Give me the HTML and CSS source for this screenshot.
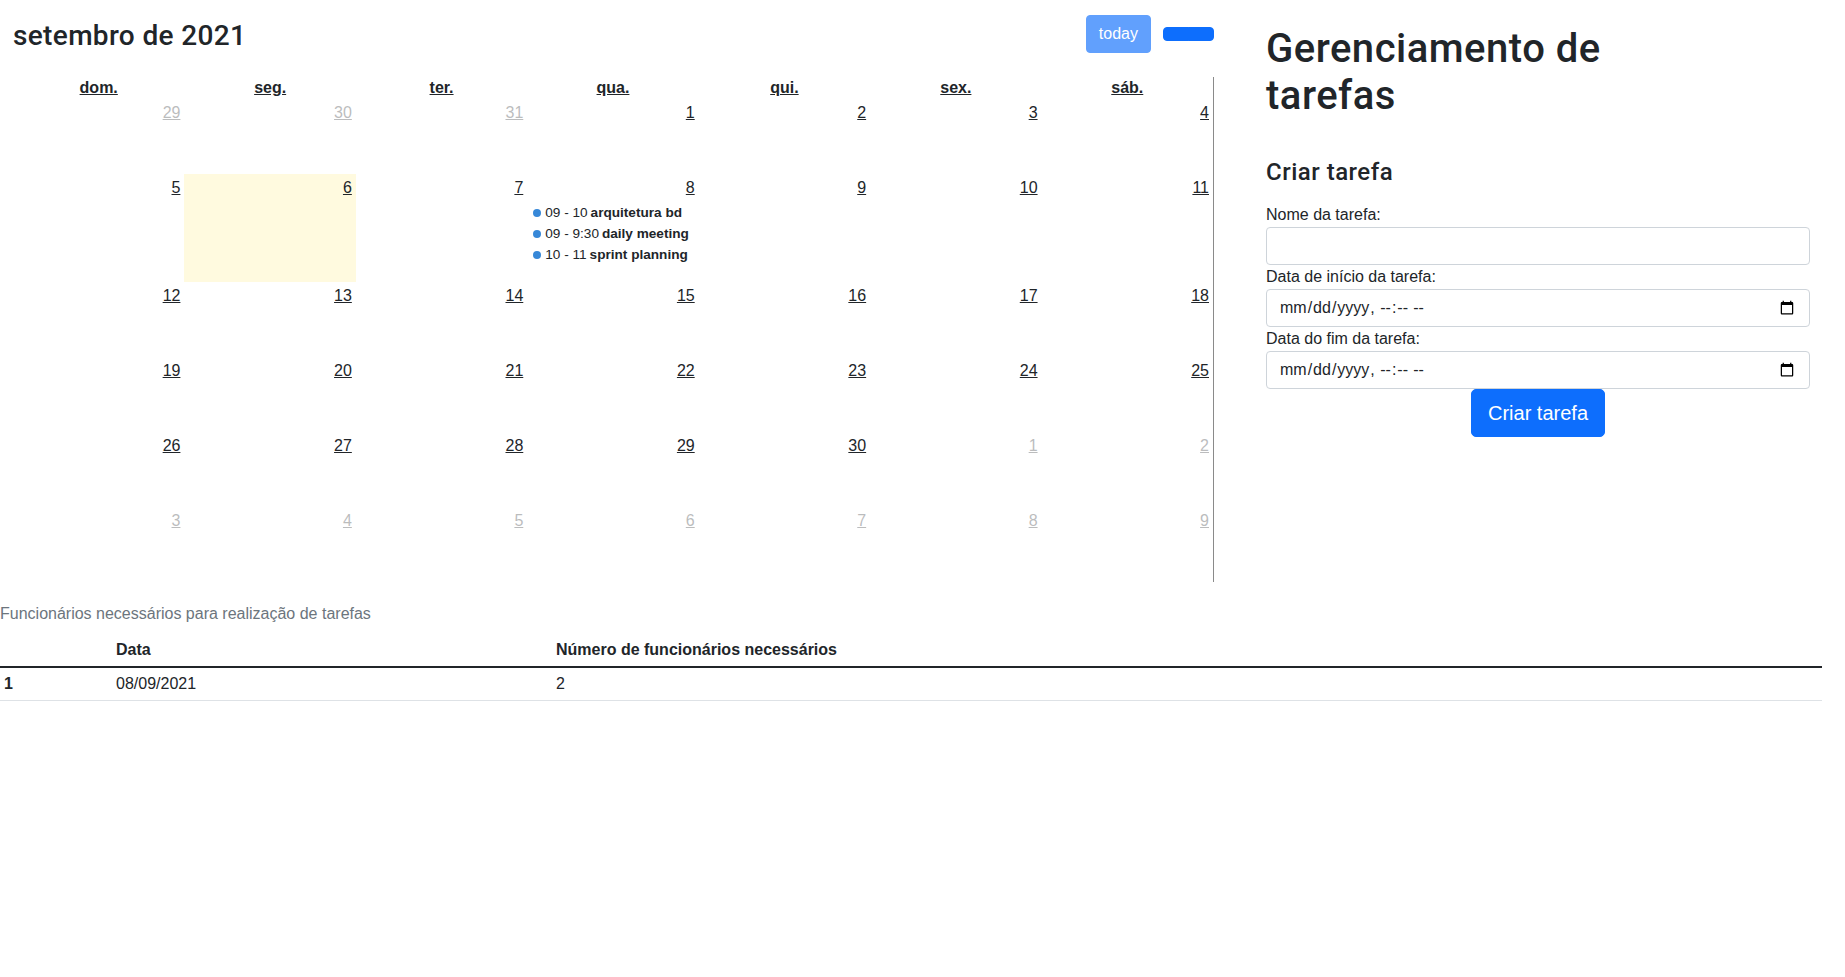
FILE: index.html
```html
<!DOCTYPE html>
<html lang="pt-BR">
<head>
<meta charset="utf-8">
<title>Gerenciamento de tarefas</title>
<link rel="stylesheet" href="styles.css">
</head>
<body>
<div class="top">
  <section class="cal-col">
    <div class="toolbar">
      <h2 class="cal-title">setembro de 2021</h2>
      <div class="toolbar-actions">
        <button class="btn btn-today" disabled>today</button>
        <div class="btn-group">
          <button class="btn btn-nav" aria-label="prev"></button>
          <button class="btn btn-nav" aria-label="next"></button>
        </div>
      </div>
    </div>
    <div class="grid">
      <div class="dow-row">
        <div class="dow"><a>dom.</a></div>
        <div class="dow"><a>seg.</a></div>
        <div class="dow"><a>ter.</a></div>
        <div class="dow"><a>qua.</a></div>
        <div class="dow"><a>qui.</a></div>
        <div class="dow"><a>sex.</a></div>
        <div class="dow"><a>sáb.</a></div>
      </div>
      <div class="week">
        <div class="day other"><a class="num">29</a></div>
        <div class="day other"><a class="num">30</a></div>
        <div class="day other"><a class="num">31</a></div>
        <div class="day"><a class="num">1</a></div>
        <div class="day"><a class="num">2</a></div>
        <div class="day"><a class="num">3</a></div>
        <div class="day"><a class="num">4</a></div>
      </div>
      <div class="week">
        <div class="day"><a class="num">5</a></div>
        <div class="day today"><a class="num">6</a></div>
        <div class="day"><a class="num">7</a></div>
        <div class="day">
          <a class="num">8</a>
          <div class="events">
            <div class="event"><span class="dot"></span><span class="time">09 - 10</span><span class="ev-title">arquitetura bd</span></div>
            <div class="event"><span class="dot"></span><span class="time">09 - 9:30</span><span class="ev-title">daily meeting</span></div>
            <div class="event"><span class="dot"></span><span class="time">10 - 11</span><span class="ev-title">sprint planning</span></div>
          </div>
        </div>
        <div class="day"><a class="num">9</a></div>
        <div class="day"><a class="num">10</a></div>
        <div class="day"><a class="num">11</a></div>
      </div>
      <div class="week">
        <div class="day"><a class="num">12</a></div>
        <div class="day"><a class="num">13</a></div>
        <div class="day"><a class="num">14</a></div>
        <div class="day"><a class="num">15</a></div>
        <div class="day"><a class="num">16</a></div>
        <div class="day"><a class="num">17</a></div>
        <div class="day"><a class="num">18</a></div>
      </div>
      <div class="week">
        <div class="day"><a class="num">19</a></div>
        <div class="day"><a class="num">20</a></div>
        <div class="day"><a class="num">21</a></div>
        <div class="day"><a class="num">22</a></div>
        <div class="day"><a class="num">23</a></div>
        <div class="day"><a class="num">24</a></div>
        <div class="day"><a class="num">25</a></div>
      </div>
      <div class="week">
        <div class="day"><a class="num">26</a></div>
        <div class="day"><a class="num">27</a></div>
        <div class="day"><a class="num">28</a></div>
        <div class="day"><a class="num">29</a></div>
        <div class="day"><a class="num">30</a></div>
        <div class="day other"><a class="num">1</a></div>
        <div class="day other"><a class="num">2</a></div>
      </div>
      <div class="week">
        <div class="day other"><a class="num">3</a></div>
        <div class="day other"><a class="num">4</a></div>
        <div class="day other"><a class="num">5</a></div>
        <div class="day other"><a class="num">6</a></div>
        <div class="day other"><a class="num">7</a></div>
        <div class="day other"><a class="num">8</a></div>
        <div class="day other"><a class="num">9</a></div>
      </div>
    </div>
  </section>

  <section class="form-col">
    <h1 class="page-title">Gerenciamento de tarefas</h1>
    <h4 class="form-title">Criar tarefa</h4>
    <form class="task-form">
      <label for="nome">Nome da tarefa:</label>
      <input id="nome" class="form-control" type="text">
      <label for="inicio">Data de início da tarefa:</label>
      <input id="inicio" class="form-control" type="datetime-local">
      <label for="fim">Data do fim da tarefa:</label>
      <input id="fim" class="form-control" type="datetime-local">
      <div class="submit-row">
        <button type="button" class="btn btn-lg">Criar tarefa</button>
      </div>
    </form>
  </section>
</div>

<section class="table-section">
  <table class="staff-table">
    <caption>Funcionários necessários para realização de tarefas</caption>
    <thead>
      <tr>
        <th class="c1"></th>
        <th class="c2">Data</th>
        <th>Número de funcionários necessários</th>
      </tr>
    </thead>
    <tbody>
      <tr>
        <th>1</th>
        <td>08/09/2021</td>
        <td>2</td>
      </tr>
    </tbody>
  </table>
</section>
</body>
</html>
```

FILE: styles.css
```css
* { box-sizing: border-box; }

body {
  margin: 0;
  font-family: "Liberation Sans", Arial, sans-serif;
  font-size: 16px;
  line-height: 24px;
  color: #212529;
  background: #fff;
}

.top {
  display: flex;
  align-items: flex-start;
}

/* ---------- calendar ---------- */
.cal-col {
  width: 1214px;
  padding: 15px 0 0 13px;
  flex: none;
}

.toolbar {
  display: flex;
  align-items: center;
  justify-content: space-between;
  height: 38px;
  margin-bottom: 24px;
}

.cal-title {
  margin: 0;
  padding-top: 3px;
  font-family: Roboto, "Liberation Sans", sans-serif;
  font-weight: 500;
  font-size: 28px;
  line-height: 33.6px;
  letter-spacing: .35px;
}

.toolbar-actions {
  display: flex;
  align-items: center;
  gap: 12px;
}

.btn {
  font-family: inherit;
  color: #fff;
  background: #0d6efd;
  border: 1px solid #0d6efd;
  border-radius: 4px;
  cursor: pointer;
}

.btn-today {
  height: 38px;
  padding: 6px 12px;
  font-size: 16px;
  line-height: 24px;
  opacity: .65;
  cursor: default;
}

.btn-group {
  display: flex;
}

.btn-nav {
  width: 26px;
  height: 14px;
  padding: 0;
}

.btn-nav:first-child {
  border-top-right-radius: 0;
  border-bottom-right-radius: 0;
}

.btn-nav + .btn-nav {
  margin-left: -1px;
  border-top-left-radius: 0;
  border-bottom-left-radius: 0;
}

.grid {
  width: 1201px;
  border-right: 1px solid #8a8a8a;
}

.dow-row,
.week {
  display: grid;
  grid-template-columns: repeat(7, 1fr);
}

.dow {
  height: 22px;
  line-height: 22px;
  text-align: center;
  font-weight: bold;
}

.dow a,
.num {
  color: #212529;
  text-decoration: underline;
}

.week {
  min-height: 75px;
}

.day {
  display: flex;
  flex-direction: column;
  min-width: 0;
}

.day.today {
  background: rgba(255, 220, 40, .15);
}

.num {
  align-self: flex-end;
  padding: 2px 4px;
  line-height: 24px;
}

.day.other .num {
  opacity: .3;
}

.events {
  margin-bottom: 17px;
}

.event {
  display: flex;
  align-items: center;
  margin: 1px 2px 0;
  font-size: 13.6px;
  line-height: 20px;
  white-space: nowrap;
}

.dot {
  width: 8px;
  height: 8px;
  border-radius: 50%;
  background: #3788d8;
  margin: 0 4px;
  flex: none;
}

.time {
  margin-right: 3px;
}

.ev-title {
  font-weight: bold;
}

/* ---------- form ---------- */
.form-col {
  width: 544px;
  margin-left: 52px;
  padding-top: 25px;
  flex: none;
}

.page-title {
  margin: 0 0 39px;
  max-width: 420px;
  font-family: Roboto, "Liberation Sans", sans-serif;
  font-weight: 500;
  font-size: 40px;
  line-height: 47px;
  letter-spacing: .5px;
}

.form-title {
  margin: 0 0 16px;
  font-family: Roboto, "Liberation Sans", sans-serif;
  font-weight: 500;
  font-size: 24px;
  line-height: 28.8px;
  letter-spacing: .5px;
}

.task-form label {
  display: block;
  line-height: 24px;
}

.form-control {
  display: block;
  width: 100%;
  height: 38px;
  padding: 6px 12px;
  font-family: inherit;
  font-size: 16px;
  line-height: 24px;
  color: #212529;
  background: #fff;
  border: 1px solid #ced4da;
  border-radius: 4px;
}

.submit-row {
  text-align: center;
}

.btn-lg {
  height: 48px;
  padding: 8px 16px;
  font-size: 20px;
  line-height: 30px;
  border-radius: 5px;
}

/* ---------- table ---------- */
.table-section {
  margin: 12px 23px 0 0;
}

.staff-table {
  width: 100%;
  border-collapse: separate;
  border-spacing: 0;
  table-layout: fixed;
}

.staff-table caption {
  caption-side: top;
  text-align: left;
  padding: 8px 0;
  color: #6c757d;
}

.staff-table th,
.staff-table td {
  padding: 4px;
  text-align: left;
  vertical-align: top;
}

.staff-table th {
  font-weight: bold;
}

.staff-table thead th {
  border-bottom: 2px solid #212529;
}

.staff-table tbody th,
.staff-table tbody td {
  border-bottom: 1px solid #dee2e6;
}

.c1 { width: 112px; }
.c2 { width: 440px; }
```
